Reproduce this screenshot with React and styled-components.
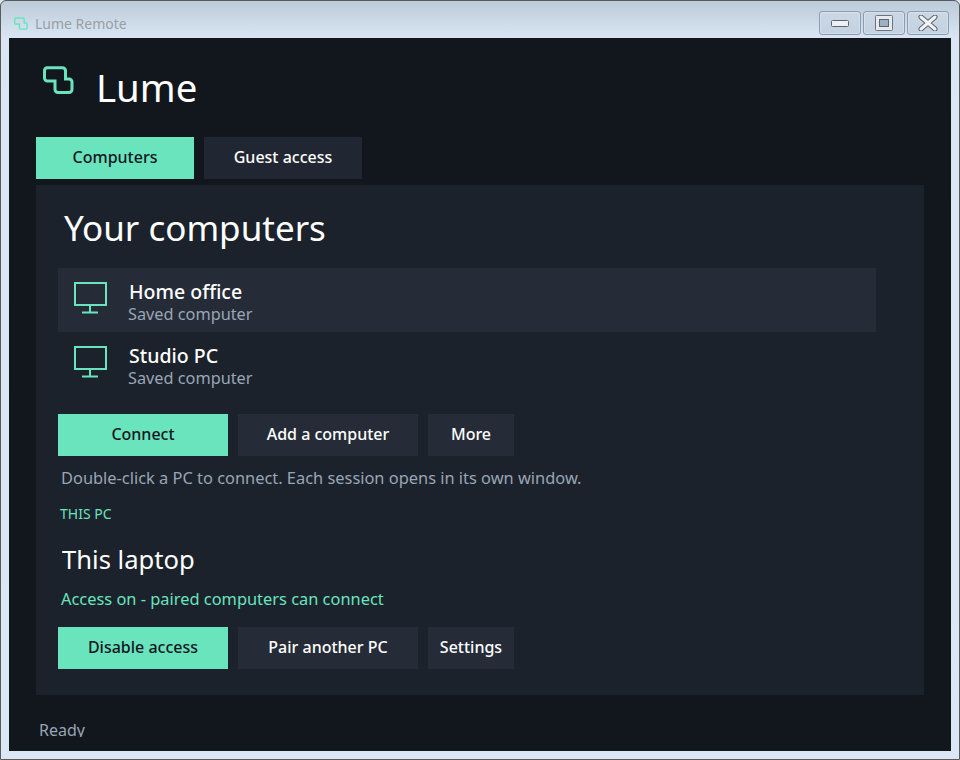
import styled, { createGlobalStyle } from "styled-components";

const GlobalStyle = createGlobalStyle`
  html, body {
    margin: 0;
    padding: 0;
    background: #dbe7f4;
  }
  * {
    box-sizing: border-box;
  }
`;

const Win = styled.div`
  width: 960px;
  height: 760px;
  display: flex;
  flex-direction: column;
  overflow: hidden;
  font-family: "Noto Sans", "Open Sans", sans-serif;
  background: linear-gradient(180deg, #bccbd9 0, #dae6f3 38px, #dbe7f4 100%);
  border: 1px solid #5a5a5a;
  border-radius: 6px 6px 0 0;
`;

const TitleBar = styled.div`
  height: 37px;
  flex: none;
  display: flex;
  align-items: flex-start;
  justify-content: space-between;
  padding: 10px 10px 0 13px;
`;

const TitleLeft = styled.div`
  display: flex;
  align-items: center;
  gap: 7px;
  height: 24px;
  color: #9a9fa6;
  font-size: 14px;
`;

const WinButtons = styled.div`
  display: flex;
  gap: 2px;
`;

const WinButton = styled.div`
  width: 42px;
  height: 24px;
  display: flex;
  align-items: center;
  justify-content: center;
  border: 1px solid #8b9db3;
  border-radius: 3px;
  background: linear-gradient(180deg, #cbd7e4, #c4d2e1);
  box-shadow: inset 0 0 0 1px rgba(255, 255, 255, 0.25);
`;

const Client = styled.div`
  flex: none;
  width: 942px;
  height: 713px;
  margin-left: 8px;
  background: #12161d;
  color: #ffffff;
  padding: 0 27px 0 27px;
  display: flex;
  flex-direction: column;
`;

const Brand = styled.div`
  height: 99px;
  flex: none;
  display: flex;
  align-items: flex-start;
  gap: 22px;
  padding: 28px 0 0 7px;
`;

const BrandName = styled.div`
  font-size: 38.400px;
  line-height: 48px;
  margin-top: -3px;
  font-weight: 400;
`;

const Tabs = styled.div`
  display: flex;
  gap: 10px;
  flex: none;
`;

const Tab = styled.div`
  width: 158px;
  height: 42px;
  padding-bottom: 2px;
  display: flex;
  align-items: center;
  justify-content: center;
  font-size: 16px;
  font-weight: 500;
  background: ${(p) => (p.$active ? "#69e4bd" : "#202732")};
  color: ${(p) => (p.$active ? "#12161d" : "#ffffff")};
`;

const Panel = styled.div`
  flex: none;
  height: 510px;
  margin-top: 6px;
  background: #1b222c;
  padding: 0 48px 0 22px;
  display: flex;
  flex-direction: column;
`;

const Heading = styled.h1`
  margin: 19px 0 0 6px;
  font-size: 35px;
  line-height: 48px;
  height: 64px;
  font-weight: 400;
`;

const ComputerList = styled.div`
  display: flex;
  flex-direction: column;
`;

const ComputerRow = styled.div`
  height: 64px;
  display: flex;
  align-items: flex-start;
  gap: 20px;
  padding: 13px 0 0 16px;
  background: ${(p) => (p.$selected ? "#252c38" : "transparent")};
`;

const ComputerText = styled.div`
  display: flex;
  flex-direction: column;
  margin-top: -2px;
`;

const ComputerName = styled.div`
  font-size: 19.500px;
  line-height: 25px;
  font-weight: 500;
  padding-left: 1px;
`;

const ComputerSub = styled.div`
  font-size: 16.300px;
  line-height: 20px;
  color: #9aa5b5;
`;

const ButtonRow = styled.div`
  display: flex;
  gap: 10px;
  margin-top: ${(p) => p.$top}px;
`;

const Button = styled.div`
  width: ${(p) => p.$w}px;
  height: 42px;
  padding-bottom: 2px;
  display: flex;
  align-items: center;
  justify-content: center;
  font-size: 16px;
  font-weight: 500;
  background: ${(p) => (p.$primary ? "#69e4bd" : "#252c38")};
  color: ${(p) => (p.$primary ? "#12161d" : "#ffffff")};
`;

const Hint = styled.div`
  margin: 10px 0 0 3px;
  font-size: 16.400px;
  line-height: 24px;
  color: #9aa5b5;
`;

const SectionLabel = styled.div`
  margin: 15px 0 0 2px;
  font-size: 14px;
  line-height: 18px;
  color: #69e4bd;
`;

const SubHeading = styled.h2`
  margin: 20px 0 0 4px;
  font-size: 25.600px;
  line-height: 34px;
  font-weight: 400;
`;

const Status = styled.div`
  margin: 10px 0 0 3px;
  font-size: 16.400px;
  line-height: 24px;
  color: #69e4bd;
`;

const StatusBar = styled.div`
  margin: 24px 0 0 3px;
  height: 18px;
  overflow: hidden;
  font-size: 16px;
  line-height: 22px;
  color: #9aa5b5;
`;

const LumeLogo = ({ width, height, stroke }) => (
  <svg width={width} height={height} viewBox="0 0 31 28" fill="none" stroke="#69e4bd" strokeWidth={stroke}>
    <path d="M4 1.800H19.500a3 3 0 0 1 3 3V13H26a3 3 0 0 1 3 3v7.500a3 3 0 0 1-3 3H15a3 3 0 0 1-3-3V15H4.500a3 3 0 0 1-3-3V4.800a3 3 0 0 1 2.500-3z" />
  </svg>
);

const MonitorIcon = () => (
  <svg width="34" height="34" viewBox="0 0 34 34" fill="none" stroke="#69e4bd" strokeWidth="2">
    <rect x="1" y="2" width="31" height="22" />
    <path d="M16 24v7M8 31.500h16" />
  </svg>
);

export default function App() {
  return (
    <Win>
      <GlobalStyle />
      <TitleBar>
        <TitleLeft>
          <LumeLogo width={14} height={13} stroke={3.200} />
          Lume Remote
        </TitleLeft>
        <WinButtons>
          <WinButton>
            <svg width="18" height="7" viewBox="0 0 18 7">
              <rect x="0.500" y="0.500" width="17" height="6" rx="1" fill="#eef1f4" stroke="#5c6470" />
            </svg>
          </WinButton>
          <WinButton>
            <svg width="18" height="16" viewBox="0 0 18 16">
              <rect x="0.500" y="0.500" width="17" height="15" rx="1" fill="#e6eaee" stroke="#6a7380" />
              <rect x="4.500" y="4.500" width="9" height="7" fill="#9db0c4" stroke="#5c6470" />
            </svg>
          </WinButton>
          <WinButton>
            <svg width="20" height="16" viewBox="0 0 20 16" fill="none" strokeLinecap="round">
              <path d="M3 2l14 12M17 2L3 14" stroke="#5c6470" strokeWidth="5" />
              <path d="M3 2l14 12M17 2L3 14" stroke="#f1f3f5" strokeWidth="3" />
            </svg>
          </WinButton>
        </WinButtons>
      </TitleBar>
      <Client>
        <Brand>
          <LumeLogo width={31} height={28} stroke={3} />
          <BrandName>Lume</BrandName>
        </Brand>
        <Tabs>
          <Tab $active>Computers</Tab>
          <Tab>Guest access</Tab>
        </Tabs>
        <Panel>
          <Heading>Your computers</Heading>
          <ComputerList>
            <ComputerRow $selected>
              <MonitorIcon />
              <ComputerText>
                <ComputerName>Home office</ComputerName>
                <ComputerSub>Saved computer</ComputerSub>
              </ComputerText>
            </ComputerRow>
            <ComputerRow>
              <MonitorIcon />
              <ComputerText>
                <ComputerName>Studio PC</ComputerName>
                <ComputerSub>Saved computer</ComputerSub>
              </ComputerText>
            </ComputerRow>
          </ComputerList>
          <ButtonRow $top={18}>
            <Button $primary $w={170}>Connect</Button>
            <Button $w={180}>Add a computer</Button>
            <Button $w={86}>More</Button>
          </ButtonRow>
          <Hint>Double-click a PC to connect. Each session opens in its own window.</Hint>
          <SectionLabel>THIS PC</SectionLabel>
          <SubHeading>This laptop</SubHeading>
          <Status>Access on - paired computers can connect</Status>
          <ButtonRow $top={16}>
            <Button $primary $w={170}>Disable access</Button>
            <Button $w={180}>Pair another PC</Button>
            <Button $w={86}>Settings</Button>
          </ButtonRow>
        </Panel>
        <StatusBar>Ready</StatusBar>
      </Client>
    </Win>
  );
}
